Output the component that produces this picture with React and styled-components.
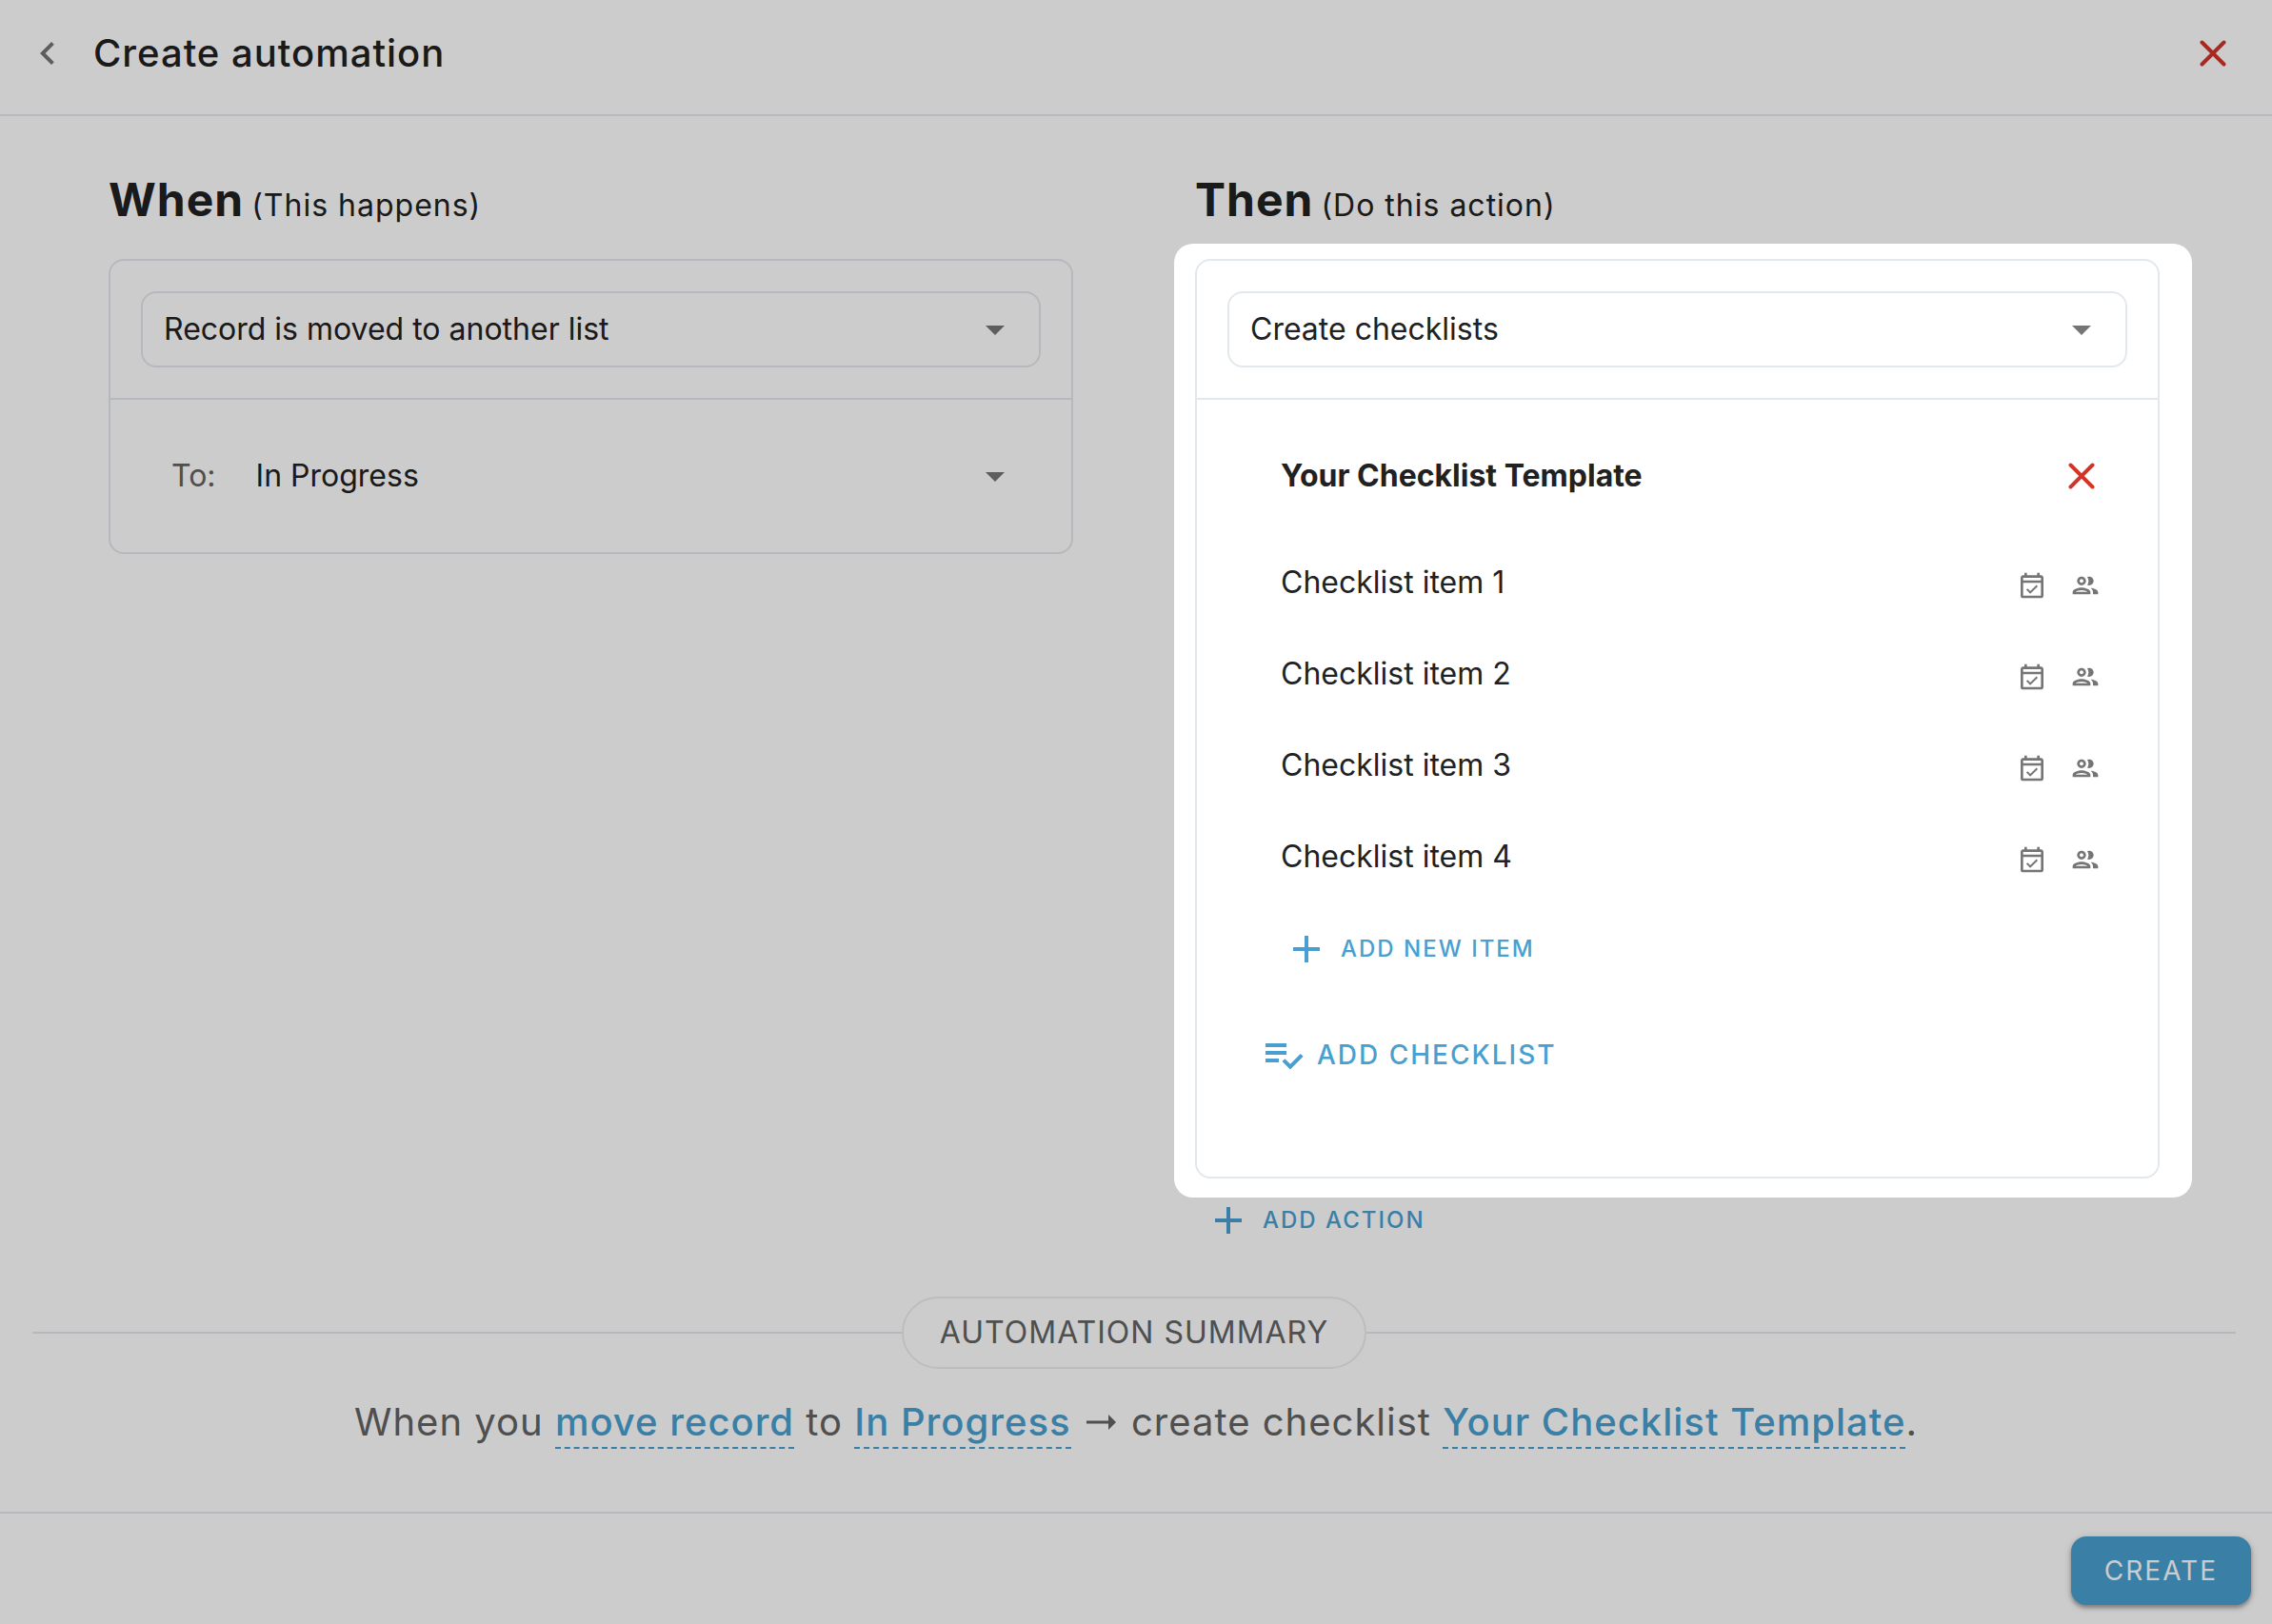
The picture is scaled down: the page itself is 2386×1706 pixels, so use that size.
import React, { useState } from 'react';
import styled, { createGlobalStyle, css } from 'styled-components';
import { MdArrowDropDown, MdChevronLeft } from 'react-icons/md';

const GlobalStyle = createGlobalStyle`
  *, *:before, *:after {
    box-sizing: border-box;
  }

  body {
    margin: 0;
    background: #fff;
    color: #212121;
    font-family: Inter, 'Liberation Sans', sans-serif;
    font-size: 32px;
    line-height: 40px;
  }

  button, select, input {
    font: inherit;
    color: inherit;
  }
`;

const Page = styled.div`
  display: flex;
  flex-direction: column;
  min-height: 100vh;
  overflow: hidden;
`;

const Header = styled.header`
  display: flex;
  align-items: center;
  padding: 28px 34px 36px 22px;
  border-bottom: 2px solid #e3e8ed;
`;

const Title = styled.h1`
  flex: 1;
  margin: 0 0 0 20px;
  font-size: 40px;
  line-height: 56px;
  font-weight: 500;
  letter-spacing: 1px;
`;

const IconButton = styled.button`
  display: flex;
  align-items: center;
  justify-content: center;
  width: 56px;
  height: 56px;
  padding: 0;
  border: 0;
  background: none;
  color: ${props => (props.$danger ? '#d23427' : '#757575')};
  cursor: pointer;
`;

const Columns = styled.main`
  flex: 1;
  display: grid;
  grid-template-columns: 1fr 1fr;
  gap: 128px;
  padding: 58px 118px 0 114px;
`;

const Heading = styled.h2`
  display: flex;
  align-items: baseline;
  gap: 8px;
  margin: 0 0 32px;
  font-size: 48px;
  line-height: 60px;
  font-weight: 700;
  letter-spacing: 1px;

  span {
    font-size: 32px;
    line-height: 40px;
    font-weight: 400;
  }
`;

const Card = styled.div`
  border: 2px solid #e3e8ed;
  border-radius: 16px;
`;

const CardTop = styled.div`
  padding: 32px;
  border-bottom: 2px solid #e3e8ed;
`;

const CardRow = styled.div`
  display: flex;
  align-items: center;
  gap: 18px;
  padding: 40px 32px;

  label {
    margin-left: 32px;
    color: #636363;
  }
`;

const SelectBox = styled.div`
  flex: 1;
  display: grid;
  align-items: center;

  select, svg {
    grid-area: 1 / 1;
  }

  svg {
    justify-self: end;
    margin-right: 24px;
    color: #757575;
    pointer-events: none;
  }
`;

const Select = styled.select`
  appearance: none;
  width: 100%;
  height: 80px;
  padding: 0 72px 0 22px;
  border: 2px solid transparent;
  border-radius: 16px;
  background: none;

  ${props => props.$outlined && css`
    border-color: #e3e8ed;
  `}
`;

// Everything outside the box is dimmed by its own shadow
const Spotlight = styled.div`
  position: relative;

  &:after {
    content: '';
    position: absolute;
    inset: -16px -34px -20px -22px;
    border-radius: 20px;
    box-shadow: 0 0 0 9999px rgba(0, 0, 0, 0.2);
    pointer-events: none;
  }
`;

const Checklist = styled.div`
  padding: 52px 48px 104px 88px;
`;

const ChecklistHeader = styled.div`
  display: flex;
  align-items: center;
  margin: 0 4px 47px 0;

  h3 {
    flex: 1;
    margin: 0;
    font-size: 32px;
    line-height: 56px;
    font-weight: 700;
  }
`;

const Items = styled.ul`
  margin: 0 0 14px;
  padding: 0;
  list-style: none;
`;

const Item = styled.li`
  display: flex;
  align-items: center;
  height: 96px;
  padding-bottom: 16px;

  input {
    flex: 1;
    min-width: 0;
    padding: 0 0 6px;
    border: 0;
    background: none;
  }
`;

const TextButton = styled.button`
  display: flex;
  align-items: center;
  gap: ${props => (props.$large ? '12px' : '22px')};
  height: 48px;
  padding: 0;
  border: 0;
  background: none;
  color: #489fd0;
  font-size: ${props => (props.$large ? '28px' : '24px')};
  font-weight: 500;
  letter-spacing: 2px;
  text-transform: uppercase;
  cursor: pointer;
`;

const AddItem = styled(TextButton)`
  margin: 0 0 63px 13px;
`;

const AddChecklist = styled(TextButton)`
  margin-left: -22px;
`;

const AddAction = styled(TextButton)`
  margin: 20px 0 0 21px;
`;

const SummaryTitle = styled.div`
  display: flex;
  align-items: center;
  margin: 40px 38px 0 34px;

  &:before, &:after {
    content: '';
    flex: 1;
    height: 2px;
    background: #e3e8ed;
  }

  span {
    padding: 16px 38px;
    border: 2px solid #ededed;
    border-radius: 38px;
    color: #636363;
    letter-spacing: 1px;
  }
`;

const Summary = styled.p`
  margin: 32px 0 0;
  padding-bottom: 70px;
  color: #636363;
  font-size: 40px;
  line-height: 48px;
  letter-spacing: 1px;
  text-align: center;

  a {
    padding-bottom: 2px;
    color: #489fd0;
    font-weight: 500;
    text-decoration: none;
    border-bottom: 2px dashed #489fd0;
  }

  svg {
    margin: 0 4px;
    vertical-align: 6px;
  }
`;

const Footer = styled.footer`
  display: flex;
  justify-content: flex-end;
  padding: 24px 22px 20px;
  border-top: 2px solid #e3e8ed;
`;

const CreateButton = styled.button`
  height: 72px;
  padding: 0 35px;
  border: 0;
  border-radius: 16px;
  background: #489fd0;
  color: #fff;
  font-size: 28px;
  letter-spacing: 2px;
  box-shadow: 0 3px 4px rgba(0, 0, 0, 0.3), 0 2px 8px rgba(0, 0, 0, 0.16);
  cursor: pointer;
`;

const CrossIcon = () => (
  <svg width="28" height="28" viewBox="0 0 28 28" fill="none" stroke="currentColor" strokeWidth="4" strokeLinecap="round">
    <path d="M2.5 2.5l23 23M25.5 2.5l-23 23" />
  </svg>
);

const PlusIcon = () => (
  <svg width="28" height="28" viewBox="0 0 28 28" fill="currentColor">
    <path d="M12 0h4v12h12v4H16v12h-4V16H0v-4h12z" />
  </svg>
);

const ArrowIcon = () => (
  <svg width="31" height="16" viewBox="0 0 31 16" fill="currentColor" role="img" aria-label="then">
    <path d="M0 6.5h23V0l8 8-8 8V9.5H0z" />
  </svg>
);

const EventIcon = () => (
  <svg width="32" height="32" viewBox="0 0 24 24" fill="currentColor">
    <path d="M19 4h-1V2h-2v2H8V2H6v2H5c-1.11 0-1.99.9-1.99 2L3 20a2 2 0 0 0 2 2h14c1.1 0 2-.9 2-2V6c0-1.1-.9-2-2-2zm0 16H5V10h14v10zm0-12H5V6h14v2zM16.53 12.66l-1.06-1.06-4.88 4.88-2.12-2.12-1.06 1.06 3.18 3.18z" />
  </svg>
);

const PeopleIcon = () => (
  <svg width="32" height="32" viewBox="0 0 24 24" fill="currentColor">
    <path d="M9 13.75c-2.34 0-7 1.17-7 3.5V19h14v-1.75c0-2.33-4.66-3.5-7-3.5zM4.34 17c.84-.58 2.87-1.25 4.66-1.25s3.82.67 4.66 1.25H4.34zM9 12c1.93 0 3.5-1.57 3.5-3.5S10.93 5 9 5 5.5 6.57 5.5 8.5 7.07 12 9 12zm0-5c.83 0 1.5.67 1.5 1.5S9.83 10 9 10s-1.5-.67-1.5-1.5S8.17 7 9 7zm7.04 6.81c1.16.84 1.96 1.96 1.96 3.44V19h4v-1.75c0-2.02-3.5-3.17-5.96-3.44zM15 12c1.93 0 3.5-1.57 3.5-3.5S16.93 5 15 5c-.54 0-1.04.13-1.5.35.63.89 1 1.98 1 3.15s-.37 2.26-1 3.15c.46.22.96.35 1.5.35z" />
  </svg>
);

const ChecklistIcon = () => (
  <svg width="48" height="48" viewBox="0 0 24 24" fill="currentColor">
    <path d="M3 6h11v2H3zM3 10h11v2H3zM3 14h7v2H3zM21.4 11.45l1.42 1.42L16 19.75l-4.25-4.25 1.42-1.42L16 16.9z" />
  </svg>
);

const items = ['Checklist item 1', 'Checklist item 2', 'Checklist item 3', 'Checklist item 4'];

const ChecklistItem = ({ text }) => {
  const [value, setValue] = useState(text);

  return (
    <Item>
      <input aria-label={text} value={value} onChange={e => setValue(e.target.value)} />
      <IconButton aria-label="Due date"><EventIcon /></IconButton>
      <IconButton aria-label="Assignees"><PeopleIcon /></IconButton>
    </Item>
  );
};

const App = () => (
  <Page>
    <GlobalStyle />
    <Header>
      <IconButton aria-label="Back"><MdChevronLeft size={48} /></IconButton>
      <Title>Create automation</Title>
      <IconButton $danger aria-label="Close"><CrossIcon /></IconButton>
    </Header>

    <Columns>
      <section>
        <Heading>When <span>(This happens)</span></Heading>
        <Card>
          <CardTop>
            <SelectBox>
              <Select $outlined aria-label="Trigger">
                <option>Record is moved to another list</option>
              </Select>
              <MdArrowDropDown size={48} />
            </SelectBox>
          </CardTop>
          <CardRow>
            <label htmlFor="to-list">To:</label>
            <SelectBox>
              <Select id="to-list">
                <option>In Progress</option>
              </Select>
              <MdArrowDropDown size={48} />
            </SelectBox>
          </CardRow>
        </Card>
      </section>

      <section>
        <Heading>Then <span>(Do this action)</span></Heading>
        <Spotlight>
          <Card>
            <CardTop>
              <SelectBox>
                <Select $outlined aria-label="Action">
                  <option>Create checklists</option>
                </Select>
                <MdArrowDropDown size={48} />
              </SelectBox>
            </CardTop>
            <Checklist>
              <ChecklistHeader>
                <h3>Your Checklist Template</h3>
                <IconButton $danger aria-label="Remove checklist"><CrossIcon /></IconButton>
              </ChecklistHeader>
              <Items>
                {items.map(text => <ChecklistItem key={text} text={text} />)}
              </Items>
              <AddItem><PlusIcon />Add new item</AddItem>
              <AddChecklist $large><ChecklistIcon />Add checklist</AddChecklist>
            </Checklist>
          </Card>
        </Spotlight>
        <AddAction><PlusIcon />Add action</AddAction>
      </section>
    </Columns>

    <SummaryTitle><span>AUTOMATION SUMMARY</span></SummaryTitle>
    <Summary>
      When you <a href="#record">move record</a> to <a href="#list">In Progress</a> <ArrowIcon /> create checklist <a href="#checklist">Your Checklist Template</a>.
    </Summary>

    <Footer>
      <CreateButton>CREATE</CreateButton>
    </Footer>
  </Page>
);

export default App;
